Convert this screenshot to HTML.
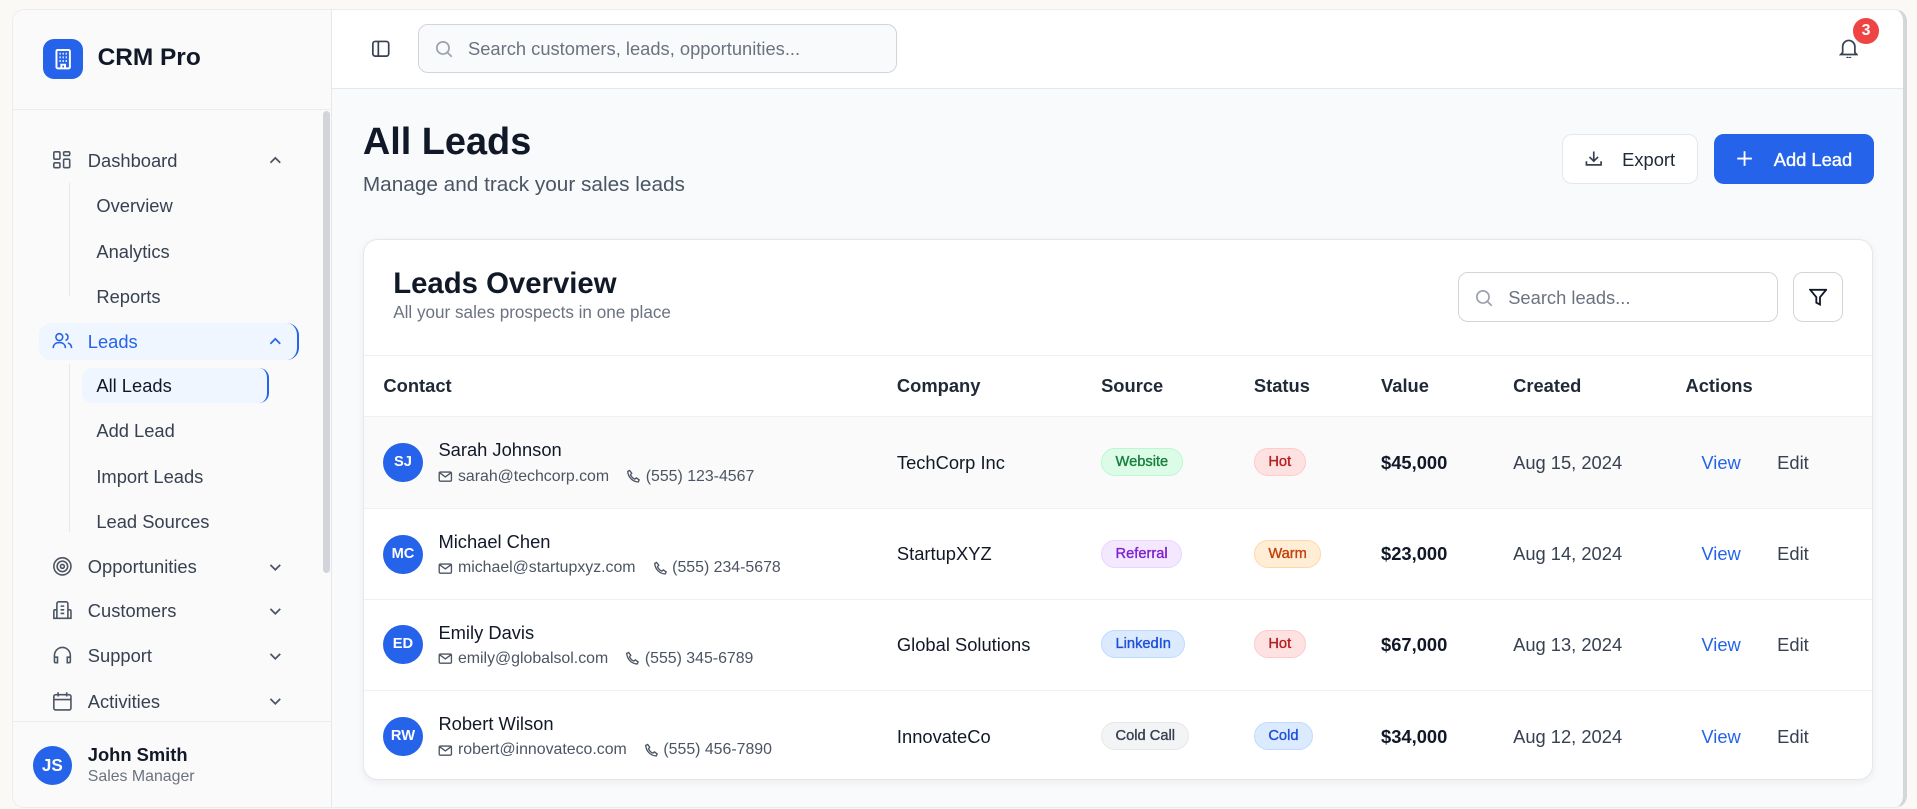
<!DOCTYPE html>
<html><head><meta charset="utf-8"><style>
*{box-sizing:border-box;margin:0;padding:0}
html{zoom:1.22258}
body{width:1568px;height:662px;background:#faf9f5;font-family:"Liberation Sans",sans-serif;color:#111827;position:relative;overflow:hidden}
.frame{position:absolute;left:10px;top:7px;width:1550px;height:654px;border:1px solid #ececec;border-radius:10px;overflow:hidden;background:#f8fafc;border-right:4px solid #d4d6dc}
.side{position:absolute;left:0;top:0;width:261px;height:100%;background:#fafafa;border-right:1px solid #e5e7eb}
.abs{position:absolute}
.logo{left:24px;top:24px;width:33px;height:33px;background:#2563eb;border-radius:9px}
.nav{position:absolute;left:61px;font-size:15px;color:#374151}
.sub{position:absolute;left:68px;font-size:15px;color:#374151}
.ic{position:absolute;left:32px}
.chev{position:absolute;left:208px}
.top{position:absolute;left:261px;top:0;right:0;height:65px;background:#fff;border-bottom:1px solid #e5e7eb}
.card{position:absolute;left:286px;top:188px;width:1235px;height:442px;background:#fff;border:1px solid #e5e7eb;border-radius:12px;box-shadow:0 2px 6px rgba(0,0,0,.06);overflow:hidden}
.th{position:absolute;top:110px;font-size:15px;font-weight:bold;color:#1f2937}
.row{position:absolute;left:0;width:100%;height:75px;border-top:1px solid #f0f0f0}
.av{position:absolute;left:16px;top:21px;width:32px;height:32px;border-radius:50%;background:#2563eb;color:#fff;font-size:12px;font-weight:bold;text-align:center;line-height:32px}
.nm{position:absolute;left:61px;top:18px;font-size:15px}
.em{position:absolute;left:61px;top:41px;font-size:13px;color:#4b5563;white-space:nowrap;display:flex;align-items:center;gap:4px}
.em svg{flex:none}
.co{position:absolute;left:436px;top:28px;font-size:15px}
.badge{position:absolute;top:25px;height:23px;display:flex;align-items:center;padding:0 11px;border-radius:12px;font-size:12px;border:1px solid;-webkit-text-stroke:.3px currentColor}
.val{position:absolute;left:832px;top:28px;font-size:15px;font-weight:bold}
.dt{position:absolute;left:940px;top:28px;font-size:15px;color:#374151}
.vw{position:absolute;left:1094px;top:28px;font-size:15px;color:#2563eb}
.ed{position:absolute;left:1156px;top:28px;font-size:15px;color:#374151}
</style></head><body>
<svg width="0" height="0" style="position:absolute"><defs>
<symbol id="m" viewBox="0 0 12 12"><rect x="1" y="2.5" width="10" height="7.5" rx="1" fill="none" stroke="#4b5563" stroke-width="1.1"/><path d="M1.3 3l4.7 3.5L10.7 3" fill="none" stroke="#4b5563" stroke-width="1.1"/></symbol>
<symbol id="p" viewBox="0 0 12 12"><path d="M3 1.2l1.7 2.3-1 1.2a6.5 6.5 0 003.6 3.6l1.2-1 2.3 1.7-.8 1.6c-4.6-.2-8.2-3.8-8.6-8.6z" fill="none" stroke="#4b5563" stroke-width="1.1"/></symbol>
</defs></svg>
<div class="frame">
<div class="side">
 <div class="abs logo"><svg width="33" height="33" viewBox="0 0 33 33" fill="none" stroke="#fff" stroke-width="1.6"><rect x="11" y="9" width="11" height="15" rx="1"/><path d="M13.5 12h1M16 12h1M18.5 12h1M13.5 15h1M16 15h1M18.5 15h1M13.5 18h1M16 18h1M18.5 18h1M15 24v-3h3v3"/></svg></div>
 <div class="abs" style="left:69px;top:28px;font-size:20px;font-weight:bold">CRM Pro</div>
 <div class="abs" style="left:0;top:81px;width:261px;border-top:1px solid #ececec"></div>
 <div class="abs" style="left:253px;top:83px;width:6px;height:378px;background:#d1d5db;border-radius:3px"></div>
 <div class="abs" style="left:46px;top:142px;height:92px;border-left:1px solid #e5e7eb"></div>
 <div class="abs" style="left:46px;top:290px;height:137px;border-left:1px solid #e5e7eb"></div>
 <div class="abs" style="left:21px;top:256px;width:213px;height:31px;background:#eff6ff;border-radius:10px;border-right:2px solid #2563eb"></div>
 <div class="abs" style="left:56px;top:293px;width:153px;height:29px;background:#eff6ff;border-radius:8px;border-right:2px solid #2563eb"></div>
 <svg class="ic" style="top:115px" width="16" height="16" viewBox="0 0 16 16" fill="none" stroke="#4b5563" stroke-width="1.3"><rect x="1.5" y="1.5" width="5" height="6" rx="1"/><rect x="9.5" y="1.5" width="5" height="3" rx="1"/><rect x="9.5" y="7.5" width="5" height="7" rx="1"/><rect x="1.5" y="10.5" width="5" height="4" rx="1"/></svg>
 <div class="nav" style="top:115px">Dashboard</div>
 <svg class="chev" style="top:117px" width="12" height="12" viewBox="0 0 12 12" fill="none" stroke="#4b5563" stroke-width="1.4"><path d="M2 8l4-4 4 4"/></svg>
 <div class="sub" style="top:152px">Overview</div>
 <div class="sub" style="top:189px">Analytics</div>
 <div class="sub" style="top:226px">Reports</div>
 <svg class="ic" style="top:263px" width="17" height="16" viewBox="0 0 17 16" fill="none" stroke="#2563eb" stroke-width="1.3"><circle cx="6" cy="5" r="2.8"/><path d="M1 14c0-3 2.2-4.5 5-4.5s5 1.5 5 4.5M11 2.3a2.8 2.8 0 010 5.4M13 9.8c1.8.6 3 2 3 4.2"/></svg>
 <div class="nav" style="top:263px;color:#2563eb">Leads</div>
 <svg class="chev" style="top:265px" width="12" height="12" viewBox="0 0 12 12" fill="none" stroke="#2563eb" stroke-width="1.4"><path d="M2 8l4-4 4 4"/></svg>
 <div class="sub" style="top:299px;color:#111827">All Leads</div>
 <div class="sub" style="top:336px">Add Lead</div>
 <div class="sub" style="top:373px">Import Leads</div>
 <div class="sub" style="top:410px">Lead Sources</div>
 <svg class="ic" style="top:447px" width="17" height="17" viewBox="0 0 17 17" fill="none" stroke="#4b5563" stroke-width="1.3"><circle cx="8.5" cy="8.5" r="7"/><circle cx="8.5" cy="8.5" r="4.3"/><circle cx="8.5" cy="8.5" r="1.6"/></svg>
 <div class="nav" style="top:447px">Opportunities</div>
 <svg class="ic" style="top:483px" width="17" height="17" viewBox="0 0 17 17" fill="none" stroke="#4b5563" stroke-width="1.3"><path d="M4 15V3a1.5 1.5 0 011.5-1.5h6A1.5 1.5 0 0113 3v12M4 8H2.5a1 1 0 00-1 1v6h14V9a1 1 0 00-1-1H13M7 5h3M7 8h3M7 11h3"/></svg>
 <div class="nav" style="top:483px">Customers</div>
 <svg class="ic" style="top:520px" width="17" height="17" viewBox="0 0 17 17" fill="none" stroke="#4b5563" stroke-width="1.3"><path d="M2 10V8.5a6.5 6.5 0 0113 0V10M2 10h2.5v4.5H3a1 1 0 01-1-1zM15 10h-2.5v4.5H14a1 1 0 001-1z"/></svg>
 <div class="nav" style="top:520px">Support</div>
 <svg class="ic" style="top:557px" width="17" height="17" viewBox="0 0 17 17" fill="none" stroke="#4b5563" stroke-width="1.3"><rect x="1.5" y="3" width="14" height="12.5" rx="1.5"/><path d="M1.5 7h14M5 1v3.5M12 1v3.5"/></svg>
 <div class="nav" style="top:557px">Activities</div>
 <svg class="chev" style="top:450px" width="12" height="12" viewBox="0 0 12 12" fill="none" stroke="#4b5563" stroke-width="1.4"><path d="M2 4l4 4 4-4"/></svg>
 <svg class="chev" style="top:486px" width="12" height="12" viewBox="0 0 12 12" fill="none" stroke="#4b5563" stroke-width="1.4"><path d="M2 4l4 4 4-4"/></svg>
 <svg class="chev" style="top:523px" width="12" height="12" viewBox="0 0 12 12" fill="none" stroke="#4b5563" stroke-width="1.4"><path d="M2 4l4 4 4-4"/></svg>
 <svg class="chev" style="top:560px" width="12" height="12" viewBox="0 0 12 12" fill="none" stroke="#4b5563" stroke-width="1.4"><path d="M2 4l4 4 4-4"/></svg>
 <div class="abs" style="left:0;top:582px;width:261px;border-top:1px solid #ececec"></div>
 <div class="abs" style="left:16px;top:602px;width:32px;height:32px;border-radius:50%;background:#2563eb;color:#fff;font-size:14px;font-weight:bold;text-align:center;line-height:32px">JS</div>
 <div class="abs" style="left:61px;top:601px;font-size:15px;font-weight:bold">John Smith</div>
 <div class="abs" style="left:61px;top:620px;font-size:13px;color:#6b7280">Sales Manager</div>
</div>
<div class="top">
 <svg class="abs" style="left:32px;top:24px" width="16" height="16" viewBox="0 0 16 16" fill="none" stroke="#374151" stroke-width="1.4"><rect x="1.5" y="2" width="13" height="12" rx="2"/><path d="M6 2v12"/></svg>
 <div class="abs" style="left:70px;top:12px;width:392px;height:40px;border:1px solid #d1d5db;border-radius:8px;background:#f9fafb"></div>
 <svg class="abs" style="left:84px;top:25px" width="15" height="15" viewBox="0 0 15 15" fill="none" stroke="#9ca3af" stroke-width="1.4"><circle cx="6.5" cy="6.5" r="5"/><path d="M10.2 10.2l3.5 3.5"/></svg>
 <div class="abs" style="left:111px;top:23px;font-size:15px;color:#6b7280">Search customers, leads, opportunities...</div>
 <svg class="abs" style="left:1232px;top:23px" width="16" height="17" viewBox="0 0 16 17" fill="none" stroke="#374151" stroke-width="1.4"><path d="M3 12V7a5 5 0 0110 0v5l1.5 1.5h-13zM6.5 15.5a1.6 1.6 0 003 0"/></svg>
 <div class="abs" style="left:1244px;top:7px;width:21px;height:21px;border-radius:50%;background:#ef4444;color:#fff;font-size:13px;font-weight:bold;text-align:center;line-height:21px">3</div>
</div>
<div class="abs" style="left:286px;top:91px;font-size:31px;font-weight:bold">All Leads</div>
<div class="abs" style="left:286px;top:134px;font-size:17px;color:#4b5563">Manage and track your sales leads</div>
<div class="abs" style="left:1267px;top:102px;width:111px;height:41px;border:1px solid #e5e7eb;border-radius:8px;background:#fff"></div>
<svg class="abs" style="left:1285px;top:114px" width="16" height="16" viewBox="0 0 16 16" fill="none" stroke="#374151" stroke-width="1.4"><path d="M8 2v8M4.5 6.5L8 10l3.5-3.5M2 10v3h12v-3"/></svg>
<div class="abs" style="left:1316px;top:114px;font-size:15px;color:#1f2937">Export</div>
<div class="abs" style="left:1391px;top:102px;width:131px;height:41px;border-radius:8px;background:#2563eb"></div>
<svg class="abs" style="left:1409px;top:115px" width="14" height="14" viewBox="0 0 14 14" fill="none" stroke="#fff" stroke-width="1.5"><path d="M7 1v12M1 7h12"/></svg>
<div class="abs" style="left:1440px;top:114px;font-size:15px;color:#fff;-webkit-text-stroke:.3px #fff">Add Lead</div>
<div class="card">
 <div class="abs" style="left:24px;top:22px;font-size:24px;font-weight:bold">Leads Overview</div>
 <div class="abs" style="left:24px;top:51px;font-size:14px;color:#6b7280">All your sales prospects in one place</div>
 <div class="abs" style="left:895px;top:26px;width:262px;height:41px;border:1px solid #d1d5db;border-radius:8px"></div>
 <svg class="abs" style="left:909px;top:40px" width="15" height="15" viewBox="0 0 15 15" fill="none" stroke="#9ca3af" stroke-width="1.4"><circle cx="6.5" cy="6.5" r="5"/><path d="M10.2 10.2l3.5 3.5"/></svg>
 <div class="abs" style="left:936px;top:38px;font-size:15px;color:#6b7280">Search leads...</div>
 <div class="abs" style="left:1169px;top:26px;width:41px;height:41px;border:1px solid #d1d5db;border-radius:8px"></div>
 <svg class="abs" style="left:1182px;top:39px" width="15" height="15" viewBox="0 0 15 15" fill="none" stroke="#111827" stroke-width="1.5"><path d="M1 1.5h13L9 7.5v6l-3-1.5V7.5z"/></svg>
 <div class="abs" style="left:0;top:94px;width:100%;border-top:1px solid #f0f0f0"></div>
 <div class="th" style="left:16px">Contact</div><div class="th" style="left:436px">Company</div><div class="th" style="left:603px">Source</div><div class="th" style="left:728px">Status</div><div class="th" style="left:832px">Value</div><div class="th" style="left:940px">Created</div><div class="th" style="left:1081px">Actions</div>

 <div class="row" style="top:144px;background:#fafafa">
  <div class="av">SJ</div><div class="nm">Sarah Johnson</div>
  <div class="em"><svg width="12" height="12"><use href="#m"/></svg>sarah@techcorp.com<svg width="12" height="12" style="margin-left:10px"><use href="#p"/></svg>(555) 123-4567</div>
  <div class="co">TechCorp Inc</div>
  <div class="badge" style="left:603px;background:#dcfce7;border-color:#bbf7d0;color:#15803d">Website</div>
  <div class="badge" style="left:728px;background:#fee2e2;border-color:#fecaca;color:#b91c1c">Hot</div>
  <div class="val">$45,000</div><div class="dt">Aug 15, 2024</div><div class="vw">View</div><div class="ed">Edit</div>
 </div>
 <div class="row" style="top:219px">
  <div class="av">MC</div><div class="nm">Michael Chen</div>
  <div class="em"><svg width="12" height="12"><use href="#m"/></svg>michael@startupxyz.com<svg width="12" height="12" style="margin-left:10px"><use href="#p"/></svg>(555) 234-5678</div>
  <div class="co">StartupXYZ</div>
  <div class="badge" style="left:603px;background:#f3e8ff;border-color:#e9d5ff;color:#7e22ce">Referral</div>
  <div class="badge" style="left:728px;background:#ffedd5;border-color:#fed7aa;color:#c2410c">Warm</div>
  <div class="val">$23,000</div><div class="dt">Aug 14, 2024</div><div class="vw">View</div><div class="ed">Edit</div>
 </div>
 <div class="row" style="top:293px">
  <div class="av">ED</div><div class="nm">Emily Davis</div>
  <div class="em"><svg width="12" height="12"><use href="#m"/></svg>emily@globalsol.com<svg width="12" height="12" style="margin-left:10px"><use href="#p"/></svg>(555) 345-6789</div>
  <div class="co">Global Solutions</div>
  <div class="badge" style="left:603px;background:#dbeafe;border-color:#bfdbfe;color:#1d4ed8">LinkedIn</div>
  <div class="badge" style="left:728px;background:#fee2e2;border-color:#fecaca;color:#b91c1c">Hot</div>
  <div class="val">$67,000</div><div class="dt">Aug 13, 2024</div><div class="vw">View</div><div class="ed">Edit</div>
 </div>
 <div class="row" style="top:368px">
  <div class="av">RW</div><div class="nm">Robert Wilson</div>
  <div class="em"><svg width="12" height="12"><use href="#m"/></svg>robert@innovateco.com<svg width="12" height="12" style="margin-left:10px"><use href="#p"/></svg>(555) 456-7890</div>
  <div class="co">InnovateCo</div>
  <div class="badge" style="left:603px;background:#f3f4f6;border-color:#e5e7eb;color:#374151">Cold Call</div>
  <div class="badge" style="left:728px;background:#dbeafe;border-color:#bfdbfe;color:#1d4ed8">Cold</div>
  <div class="val">$34,000</div><div class="dt">Aug 12, 2024</div><div class="vw">View</div><div class="ed">Edit</div>
 </div>
</div>
</div>
</body></html>
